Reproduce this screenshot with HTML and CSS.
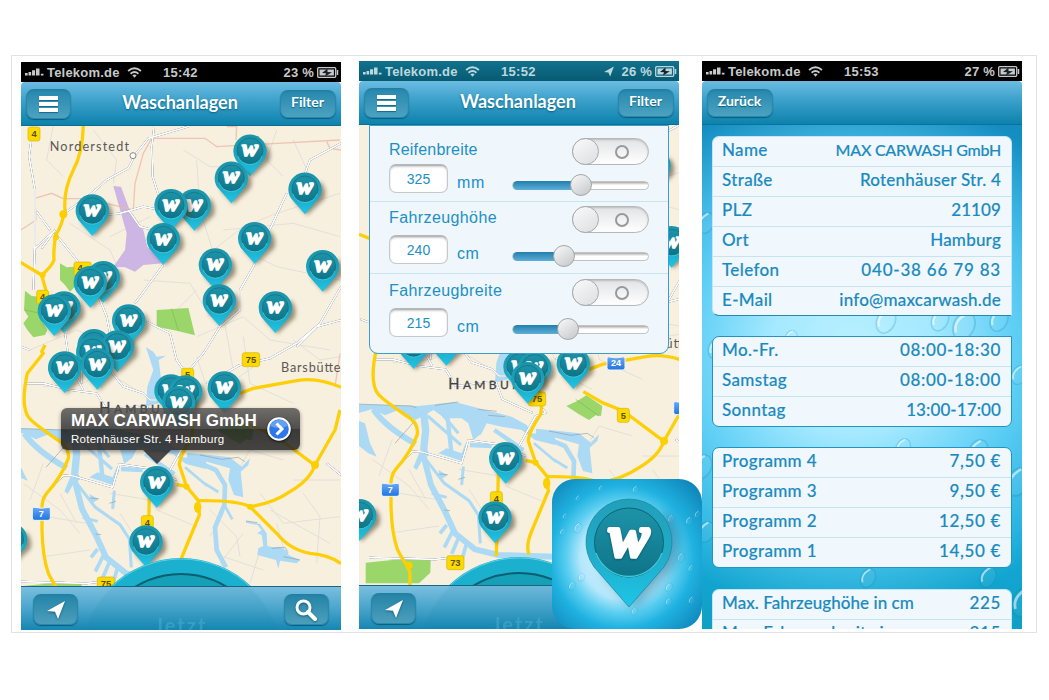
FILE: index.html
```html
<!DOCTYPE html>
<html lang="de">
<head>
<meta charset="utf-8">
<title>Waschanlagen</title>
<link rel="stylesheet" href="styles.css">
</head>
<body>
<svg class="sprites" width="0" height="0" aria-hidden="true">
  <defs>
    <linearGradient id="disc" x1="0" y1="0" x2="0" y2="1"><stop offset="0" stop-color="#1d93a8"/><stop offset="1" stop-color="#0f7488"/></linearGradient>
    <linearGradient id="pinbody" x1="0" y1="0" x2="0" y2="1"><stop offset="0" stop-color="#1b93a9"/><stop offset=".55" stop-color="#1fa5be"/><stop offset="1" stop-color="#1dc7ea"/></linearGradient>
    <linearGradient id="bigbody" x1="0" y1="0" x2="0" y2="1"><stop offset="0" stop-color="#219fb9"/><stop offset=".5" stop-color="#20abc8"/><stop offset="1" stop-color="#1dc6e8"/></linearGradient>
    <linearGradient id="shieldblue" x1="0" y1="0" x2="0" y2="1"><stop offset="0" stop-color="#69a9f5"/><stop offset="1" stop-color="#1f73e0"/></linearGradient>
    <filter id="soft" x="-50%" y="-50%" width="200%" height="200%"><feGaussianBlur stdDeviation="6"/></filter>
    <symbol id="pin" viewBox="-60 -60 140 150" overflow="visible">
      <path d="M-34 34L6 78L58 30A48 48 0 0 0 46 -22Z" fill="#4a3a20" opacity=".55" filter="url(#soft)"/>
      <path d="M-42 28L0 76L42 28A50 50 0 1 0 -42 28Z" fill="url(#pinbody)"/>
      <circle r="39" fill="url(#disc)" stroke="#0d6c80" stroke-width="2"/>
      <path d="M-37 14A39 39 0 0 0 37 14" fill="none" stroke="#43cde4" stroke-width="2.5"/>
      <text class="w" x="0" y="16" text-anchor="middle">w</text>
    </symbol>
    <g id="yshield"><rect x="-18" y="-21" width="36" height="42" rx="7" fill="#fcd900" stroke="#d9b400" stroke-width="2"/></g>
    <g id="yshieldw"><rect x="-26" y="-21" width="52" height="42" rx="7" fill="#fcd900" stroke="#d9b400" stroke-width="2"/></g>
    <g id="bshield"><path d="M-27-14Q-27-21-20-19Q0-14 20-19Q27-21 27-14V13Q27 20 20 20H-20Q-27 20-27 13Z" fill="url(#shieldblue)" stroke="#eef5ff" stroke-width="3"/></g>
    <g id="land">
      <rect x="-100" y="100" width="1200" height="1700" fill="#f7f0df"/>
      <g class="minor">
        <path d="M130 225L110 330L160 380M250 240L320 330L310 400M520 300L600 350L680 350M560 330L570 480L620 640M800 240L770 330L820 380M850 270L900 380M610 600L700 530L800 490L990 430M640 540L850 520L990 560M700 600L800 650L990 690M180 520L300 600L340 690M300 560L420 500M400 690L540 700L600 800M560 860L700 800L780 870L960 900M500 780L560 720M640 800L670 960M700 860L720 1000L850 1060M850 870L930 930L990 920M60 900L200 840L350 900M100 1010L220 1000L320 940M280 960L380 1020M660 1000L760 930M560 920L600 1040L700 1090"/>
        <path d="M40 1300L150 1380L210 1450M110 1400L230 1420M100 1520L240 1500M150 1330L200 1420M300 1330L420 1350M330 1390L400 1500M440 1380L560 1430M640 1390L600 1460M660 1300L720 1200L820 1230M750 1330L820 1420L990 1400M640 1520L760 1560M850 1290L990 1290M780 1380L960 1480M700 1450L630 1540L700 1600M750 1500L720 1600M880 1330L930 1400L920 1540M800 1420L830 1530M100 1240L60 1350M600 1380L680 1460L690 1520"/>
      </g>
      <path d="M310 408L333 410L358 478L400 540L412 590L460 640L400 645L375 665L345 652L310 650L345 600L350 550Z" fill="#cdb5e4"/>
      <g fill="#9bd66a"><path d="M150 640L170 652L195 650L205 700L180 725L165 705L150 690Z"/><path d="M45 722L65 738L90 740L100 790L90 805L112 840L105 855L70 862L52 840L40 820L55 800L42 780Z"/><path d="M440 780L535 774L555 856L500 842L440 830Z"/><path d="M622 1140L655 1125L682 1108L730 1140L726 1170L710 1168L690 1182L660 1165Z"/><path d="M20 1610L100 1602L215 1602L214 1640L180 1672L20 1672Z"/></g>
      <path d="M485 776L505 842M45 780L90 790M650 1120L720 1170" stroke="#7cba53" stroke-width="2" fill="none"/>
      <path d="M408 892L430 905L440 920L468 917L446 930L455 1000L445 1060L408 1070L412 1010L430 960Z" fill="#acd9f4"/>
      <g transform="translate(-12 1092)">
        <path fill="#acd9f4" d="M-10 42L190 48L300 36L400 62L470 80L515 105L530 130L600 140V165L540 150L500 120L440 110L395 100L380 130L355 150L340 100L320 85L270 85L235 60L200 80L180 90L130 60L90 76L50 58L-10 75ZM-10 85L30 100L45 160L65 200L40 190L15 170L-10 155ZM205 160L225 195L205 205L185 240L175 232ZM250 190L275 175L320 190L332 160L340 170L318 212ZM250 240L278 256L258 268Z"/>
        <g class="canal">
          <path stroke-width="18" d="M55 58Q90 110 182 162M205 195L228 285L268 360L300 430L360 478L430 495L600 500"/>
          <path stroke-width="22" d="M205 60L212 120L206 180"/>
          <path stroke-width="9" d="M210 205L268 280L342 332L370 375L376 460M325 230L320 285M218 78L318 165M255 65L310 130M230 310L275 322"/>
          <path stroke-width="13" d="M278 85L290 195M345 165L410 168M418 120L505 180M360 90L372 135"/>
          <path stroke-width="11" d="M292 425L268 472M312 440L290 492M335 460L322 505M275 405L255 430"/>
        </g>
        <path class="quay" d="M0 42L170 48L185 54M240 46L310 36M370 58L425 64M400 76L450 80M250 252L278 254M268 360L285 362M310 268L330 262M180 92L120 160"/>
      </g>
      <g transform="translate(480 1170)">
        <path fill="#acd9f4" d="M50 38L120 45L180 52L215 80L240 55L235 75L212 95L220 172L192 165L175 120L180 85L100 62L55 60ZM228 243L270 252L290 280L292 318L310 322L330 320L355 335L355 345L390 360L380 370L330 362L325 386L318 360L262 345L265 325L280 318L275 285L262 280L275 270L262 255L228 248Z"/>
        <g class="canal"><path stroke-width="14" d="M50 52L138 90L165 135L163 195L135 262L140 330L168 382"/><path stroke-width="8" d="M163 195L187 238M95 125L145 156M45 82L112 138"/></g>
        <path class="quay" d="M90 45L155 58L205 52L225 65M228 243L262 248M305 325L345 322L352 333M340 350L390 360"/>
      </g>
      <path class="dash" d="M75 445L125 430L160 446L230 446L330 470L370 480L375 400L400 310L425 265H585L620 290L990 270M75 445L78 510L33 540M650 230H680L678 270M950 275L960 295L993 300M990 910L975 1010"/>
      <g class="street">
        <path d="M70 225L57 320L75 420L75 580L70 720M433 225L425 290L428 380L450 450M540 228L415 265L375 315L355 355L290 390L245 430L170 485M330 490L400 470L450 480M330 490L240 500M355 480L390 530L430 540M993 280L900 330L885 370M830 430L770 560L730 650L690 720L690 780L630 830L580 910L530 970M460 645L375 760M135 540L70 600M135 550L200 630L250 700L290 800L310 900M80 485L120 540M95 595L135 540M410 815L480 850L500 930L535 980M165 850L180 950L220 1020M5 880L60 900M993 710L930 820L860 880L780 925L690 945M993 810L920 830L860 890M590 1000L690 945M50 1000L100 1000L180 1020L260 1030L290 1080L410 1065M300 960L340 1010L400 1030L420 1050L480 1050"/>
        <path d="M125 1310L160 1276L190 1278L308 1312L328 1242L420 1255L500 1290M480 1260L530 1170L560 1160L500 1080M410 1065L430 1120L520 1160M215 1000V930M950 1240L993 1275M30 1595L230 1600L300 1592"/>
      </g>
      <g class="road">
        <path d="M220 225Q218 310 190 360Q160 420 165 480Q155 530 137 555Q130 600 132 630Q125 650 95 675M0 625L33 638L95 675L113 740M105 885L95 905L100 910L52 970Q30 1070 58 1105Q70 1120 140 1168Q180 1190 175 1225Q155 1280 110 1330Q92 1350 96 1400V1440Q98 1520 115 1570Q130 1600 140 1612L153 1640V1680"/>
        <path d="M690 1030L730 1015L860 992Q920 980 993 1012M990 1080L975 1140L915 1245M673 1097L730 1130L793 1155L900 1235L915 1245Q900 1290 840 1325Q790 1360 720 1370Q680 1350 565 1352L530 1310L508 1245Q508 1220 545 1165L550 1120M500 1303L530 1310M565 1352L568 1395L517 1518Q500 1560 510 1585M720 1370L800 1450Q840 1500 900 1510Q960 1515 993 1541M418 1340L412 1590M670 1030L640 1060M535 980L540 1120"/>
      </g>
      <g fill="#fcd000"><circle cx="160" cy="493" r="12"/><circle cx="138" cy="562" r="9"/><circle cx="98" cy="675" r="9"/><circle cx="915" cy="1245" r="12"/><ellipse cx="563" cy="1372" rx="11" ry="17"/><circle cx="720" cy="1370" r="9"/><circle cx="530" cy="1310" r="9"/><circle cx="150" cy="1618" r="11"/></g>
      <circle cx="369" cy="317" r="9" fill="#fff" stroke="#888" stroke-width="3"/>
      <g class="shieldtext">
        <use href="#yshield" x="72" y="252"/><text x="72" y="261">4</text>
        <use href="#yshieldw" x="218" y="657"/><text x="210" y="664">4</text>
        <use href="#yshield" x="98" y="742"/><text x="98" y="751">4</text>
        <use href="#yshield" x="412" y="1418"/><text x="412" y="1429">4</text>
      </g>
      <use href="#bshield" x="94" y="1391"/><text class="bnum" x="94" y="1400">7</text>
      <text class="town" x="119" y="304" textLength="238">Norderstedt</text>
      <text class="town" x="813" y="966" textLength="190">Barsbüttel</text>
      <text class="city" x="268" y="1088" textLength="250"><tspan font-size="44">H</tspan>AMBURG</text>
    </g>
    <g id="pins">
      <use href="#pin" x="660" y="243" width="140" height="150"/><use href="#pin" x="604" y="324" width="140" height="150"/>
      <use href="#pin" x="825" y="357" width="140" height="150"/><use href="#pin" x="187" y="422" width="140" height="150"/>
      <use href="#pin" x="493" y="406" width="140" height="150"/><use href="#pin" x="423" y="406" width="140" height="150"/>
      <use href="#pin" x="400" y="508" width="140" height="150"/><use href="#pin" x="674" y="505" width="140" height="150"/>
      <use href="#pin" x="556" y="584" width="140" height="150"/><use href="#pin" x="878" y="589" width="140" height="150"/>
      <use href="#pin" x="568" y="692" width="140" height="150"/><use href="#pin" x="736" y="713" width="140" height="150"/>
      <use href="#pin" x="220" y="622" width="140" height="150"/><use href="#pin" x="181" y="637" width="140" height="150"/>
      <use href="#pin" x="102" y="713" width="140" height="150"/><use href="#pin" x="73" y="722" width="140" height="150"/>
      <use href="#pin" x="296" y="752" width="140" height="150"/><use href="#pin" x="192" y="826" width="140" height="150"/>
      <use href="#pin" x="262" y="830" width="140" height="150"/><use href="#pin" x="188" y="846" width="140" height="150"/>
      <use href="#pin" x="104" y="893" width="140" height="150"/><use href="#pin" x="202" y="883" width="140" height="150"/>
      <use href="#pin" x="583" y="953" width="140" height="150"/><use href="#pin" x="423" y="962" width="140" height="150"/>
      <use href="#pin" x="467" y="965" width="140" height="150"/><use href="#pin" x="446" y="997" width="140" height="150"/>
      <use href="#pin" x="380" y="1237" width="140" height="150"/><use href="#pin" x="348" y="1415" width="140" height="150"/>
      <use href="#pin" x="-58" y="1408" width="140" height="150"/>
    </g>
    <g id="dial"><circle cx="160" cy="597" r="101" fill="#1ab0ce"/><circle cx="160" cy="597" r="100" fill="none" stroke="#5cd0e6" stroke-width="1"/><circle cx="160" cy="600" r="88" fill="#16a0b8" stroke="#0b5d70" stroke-width="2"/></g>
    <symbol id="signal" viewBox="0 0 25 10"><path d="M0 6h3v3H0zM4 5h3v4H4zM8 3h3.500v6H8zM12.500 1h4v8h-4zM18 7h3v2h-3z" fill="currentColor"/></symbol>
    <symbol id="wifi" viewBox="0 0 16 12"><g fill="none" stroke="currentColor" stroke-width="2"><path d="M1 4.3Q8-1.7 15 4.3"/><path d="M3.7 7.3Q8 3.7 12.3 7.3"/></g><path d="M5.7 9Q8 7.3 10.3 9L8 11.7Z" fill="currentColor"/></symbol>
    <symbol id="battery" viewBox="0 0 22 11"><rect x=".7" y=".7" width="18" height="9.6" rx="1" fill="none" stroke="currentColor" stroke-width="1.3"/><rect x="2.5" y="2.5" width="14.4" height="6" fill="currentColor"/><path d="M20.5 3v5" stroke="currentColor" stroke-width="1.5"/><path d="M10.5 1.5L5 6L9 6.3L8 9.5L15 5.3L10.5 5Z" fill="#17242a"/></symbol>
    <symbol id="arrow" viewBox="0 0 20 20"><path d="M19 1L1 11L9 11.7L12 19Z" fill="currentColor"/></symbol>
    <symbol id="drop" viewBox="0 0 20 24"><ellipse cx="10" cy="12" rx="6.5" ry="9" transform="rotate(25 10 12)" fill="#fff" fill-opacity=".06" stroke="#0585b8" stroke-opacity=".22" stroke-width="1.2"/><path d="M5 16Q3 9 12 4" fill="none" stroke="#fff" stroke-opacity=".55" stroke-width="1.6"/></symbol>
  </defs>
</svg>

<main class="frame">
  <section class="phone first">
    <header class="status">
      <svg class="signal"><use href="#signal"/></svg><span class="carrier">Telekom.de</span><svg class="wifi"><use href="#wifi"/></svg><span class="clock">15:42</span><span class="percent">23 %</span><svg class="battery"><use href="#battery"/></svg>
    </header>
    <nav class="bar"><button class="btn menu"><i></i><i></i><i></i></button><h1>Waschanlagen</h1><button class="btn filter">Filter</button></nav>
    <div class="map">
      <svg width="320" height="460" viewBox="0 64 320 460">
        <g transform="translate(-11 -12) scale(.33333)"><use href="#land"/>
          <g class="shieldtext"><use href="#yshieldw" x="723" y="929"/><text x="723" y="939">75</text><use href="#yshield" x="533" y="976"/><text x="533" y="985">5</text><use href="#yshieldw" x="288" y="1602"/><text x="288" y="1611">75</text></g>
          <use href="#pins"/></g>
        <use href="#dial"/>
      </svg>
      <aside class="callout"><div><strong>MAX CARWASH GmbH</strong><span>Rotenhäuser Str. 4 Hamburg</span></div>
        <svg class="disclose" viewBox="0 0 24 24"><circle cx="12" cy="12" r="10.8" fill="#2c78ea" stroke="#fff" stroke-width="2"/><path d="M3 9a9.6 9.6 0 0 1 18 0Q12 13 3 9Z" fill="#7db0f5" opacity=".7"/><path d="M9.5 6.5L15 12L9.5 17.5" fill="none" stroke="#fff" stroke-width="3"/></svg>
      </aside>
    </div>
    <footer class="tools"><button class="btn"><svg class="loc"><use href="#arrow"/></svg></button><span class="ghost">Jetzt</span><button class="btn"><svg class="lens" viewBox="0 0 22 22"><circle cx="8.5" cy="8.5" r="6.5" fill="none" stroke="#fff" stroke-width="3"/><path d="M13 13L20 20" stroke="#fff" stroke-width="4" stroke-linecap="round"/></svg></button></footer>
  </section>

  <section class="phone second">
    <header class="status teal">
      <svg class="signal"><use href="#signal"/></svg><span class="carrier">Telekom.de</span><svg class="wifi"><use href="#wifi"/></svg><span class="clock">15:52</span><svg class="gps"><use href="#arrow"/></svg><span class="percent near">26 %</span><svg class="battery"><use href="#battery"/></svg>
    </header>
    <nav class="bar"><button class="btn menu"><i></i><i></i><i></i></button><h1>Waschanlagen</h1><button class="btn filter">Filter</button></nav>
    <div class="map">
      <svg width="320" height="460" viewBox="0 64 320 460">
        <g transform="translate(0 -35) scale(.33333)"><use href="#land"/>
          <g class="shieldtext"><use href="#yshieldw" x="534" y="1119"/><text x="534" y="1129">75</text><use href="#yshield" x="793" y="1168"/><text x="793" y="1178">5</text><use href="#yshieldw" x="289" y="1610"/><text x="289" y="1620">73</text></g>
          <use href="#bshield" x="771" y="1012"/><text class="bnum" x="771" y="1021">24</text><use href="#bshield" x="971" y="1146"/>
          <use href="#pins"/></g>
        <use href="#dial"/>
      </svg>
      <form class="panel">
        <fieldset class="r1"><div class="line"><label>Reifenbreite</label><span class="toggle"></span></div><div class="line low"><output>325</output><span class="unit">mm</span><span class="slider"><i style="width:50%"></i><b></b></span></div></fieldset>
        <fieldset class="r2"><div class="line"><label>Fahrzeughöhe</label><span class="toggle"></span></div><div class="line low"><output>240</output><span class="unit">cm</span><span class="slider"><i style="width:37.5%"></i><b></b></span></div></fieldset>
        <fieldset class="r3"><div class="line"><label>Fahrzeugbreite</label><span class="toggle"></span></div><div class="line low"><output>215</output><span class="unit">cm</span><span class="slider"><i style="width:40.5%"></i><b></b></span></div></fieldset>
      </form>
    </div>
    <footer class="tools"><button class="btn"><svg class="loc"><use href="#arrow"/></svg></button><span class="ghost">Jetzt</span></footer>
  </section>

  <section class="phone third">
    <header class="status">
      <svg class="signal"><use href="#signal"/></svg><span class="carrier">Telekom.de</span><svg class="wifi"><use href="#wifi"/></svg><span class="clock">15:53</span><span class="percent">27 %</span><svg class="battery"><use href="#battery"/></svg>
    </header>
    <nav class="bar"><button class="btn back">Zurück</button></nav>
    <div class="details">
      <svg class="drops" width="320" height="504">
        <use href="#drop" x="-8" y="80" width="24" height="36"/><use href="#drop" x="2" y="208" width="26" height="30"/><use href="#drop" x="80" y="202" width="18" height="22"/><use href="#drop" x="170" y="178" width="28" height="36"/><use href="#drop" x="225" y="180" width="26" height="30"/><use href="#drop" x="245" y="182" width="34" height="38"/><use href="#drop" x="284" y="178" width="26" height="34"/><use href="#drop" x="190" y="310" width="22" height="26"/><use href="#drop" x="260" y="310" width="32" height="34"/><use href="#drop" x="-14" y="320" width="28" height="44"/><use href="#drop" x="300" y="335" width="32" height="44"/><use href="#drop" x="155" y="440" width="22" height="26"/><use href="#drop" x="274" y="438" width="24" height="28"/><use href="#drop" x="-8" y="392" width="24" height="30"/><use href="#drop" x="305" y="456" width="34" height="42"/><use href="#drop" x="306" y="235" width="22" height="30"/>
      </svg>
      <dl class="l1"><div><dt>Name</dt><dd class="tight">MAX CARWASH GmbH</dd></div><div><dt>Straße</dt><dd class="street-name">Rotenhäuser Str. 4</dd></div><div><dt>PLZ</dt><dd class="plz">21109</dd></div><div><dt>Ort</dt><dd class="street-name">Hamburg</dd></div><div><dt>Telefon</dt><dd class="tel">040-38 66 79 83</dd></div><div><dt>E-Mail</dt><dd class="mail">info@maxcarwash.de</dd></div></dl>
      <dl class="l2"><div><dt>Mo.-Fr.</dt><dd>08:00-18:30</dd></div><div><dt>Samstag</dt><dd>08:00-18:00</dd></div><div><dt>Sonntag</dt><dd class="plz">13:00-17:00</dd></div></dl>
      <dl class="l3"><div><dt>Programm 4</dt><dd>7,50 €</dd></div><div><dt>Programm 3</dt><dd>9,50 €</dd></div><div><dt>Programm 2</dt><dd>12,50 €</dd></div><div><dt>Programm 1</dt><dd>14,50 €</dd></div></dl>
      <dl class="l4"><div><dt>Max. Fahrzeughöhe in cm</dt><dd>225</dd></div><div><dt>Max. Fahrzeugbreite in cm</dt><dd>215</dd></div></dl>
    </div>
  </section>

  <svg class="appicon" width="150" height="150" viewBox="0 0 150 150">
    <defs><radialGradient id="glow" cx=".47" cy=".52" r=".7"><stop offset="0" stop-color="#e2f8ff"/><stop offset=".4" stop-color="#b4e7fb"/><stop offset=".54" stop-color="#58cdf0"/><stop offset=".68" stop-color="#1fb2e0"/><stop offset="1" stop-color="#0d80b5"/></radialGradient></defs>
    <rect width="150" height="150" rx="23" fill="url(#glow)"/>
    <use href="#drop" x="22" y="15" width="8" height="9"/><use href="#drop" x="45" y="5" width="8" height="9"/><use href="#drop" x="79" y="5" width="9" height="11"/><use href="#drop" x="9" y="33" width="8" height="9"/><use href="#drop" x="20" y="42" width="12" height="14"/><use href="#drop" x="6" y="48" width="9" height="10"/><use href="#drop" x="114" y="34" width="10" height="12"/><use href="#drop" x="131" y="36" width="12" height="12"/><use href="#drop" x="141" y="30" width="9" height="11"/><use href="#drop" x="123" y="72" width="12" height="13"/><use href="#drop" x="24" y="93" width="11" height="11"/><use href="#drop" x="15" y="101" width="10" height="12"/><use href="#drop" x="112" y="102" width="10" height="13"/><use href="#drop" x="135" y="84" width="8" height="11"/><use href="#drop" x="78" y="127" width="9" height="11"/><use href="#drop" x="112" y="116" width="9" height="14"/><use href="#drop" x="135" y="116" width="9" height="11"/>
    <path d="M50 92L82 128L120 88Q134 58 116 34Z" fill="#075c82" opacity=".5" filter="url(#soft)"/>
    <path d="M42 88L77 128L112 88A43 43 0 1 0 42 88Z" fill="url(#bigbody)" stroke="#17859c" stroke-width=".7"/>
    <circle cx="77" cy="63.500" r="34.500" fill="url(#disc)" stroke="#0b6576" stroke-width="1"/><path d="M44 74A35 35 0 0 0 110 74" fill="none" stroke="#45cbe0" stroke-width="1.200"/>
    <text class="bigw" x="77" y="77" text-anchor="middle">w</text>
  </svg>
</main>
</body>
</html>
```
FILE: styles.css
```css
*, *::before, *::after { box-sizing: border-box; }
body { margin: 0; height: 700px; overflow: hidden; background: #fff; font-family: "Liberation Sans", sans-serif; }
.sprites { position: absolute; }
.frame { position: relative; width: 1026px; height: 578px; margin: 55px 0 0 11px; border: 1px solid #e2e2e2; padding: 5px 0 0 9px; display: flex; align-items: flex-start; }
.phone { width: 320px; height: 568px; overflow: hidden; display: flex; flex-direction: column; flex: none; }
.first { margin-top: 1px; }
.second { margin-left: 18px; }
.third { margin-left: 23px; }

.status { height: 20px; flex: none; background: #000; color: #c8c9ca; display: flex; align-items: center; font-weight: bold; font-size: 13px; padding: 0 2px 0 4px; }
.status.teal { background: linear-gradient(#11728d, #075a72); color: #bcd8df; }
.signal { width: 22px; height: 10px; }
.carrier { letter-spacing: .2px; width: 73px; white-space: nowrap; }
.wifi { width: 15px; height: 11px; margin-left: 7px; }
.clock { margin-left: 21px; letter-spacing: .3px; }
.percent { margin-left: auto; margin-right: 3px; letter-spacing: .2px; }
.gps { width: 12px; height: 11px; margin-left: auto; margin-right: 7px; }
.percent.near { margin-left: 0; }
.battery { width: 22px; height: 11px; }

.bar { height: 44px; flex: none; display: flex; justify-content: space-between; align-items: center; padding: 0 5px; background: linear-gradient(#6cbce2 0, #3ba0ca 45%, #0d82ac 100%); border-bottom: 1px solid #0a6d92; border-radius: 4px 4px 0 0; }
h1 { margin: 0 0 3px 9px; color: #fff; font: 700 18px Lato, sans-serif; text-shadow: 0 1px 2px #06617f; }
.btn { border: 1px solid #2c88ab; border-top-color: #257d9f; border-radius: 8px; padding: 0; height: 30px; width: 45px; background: linear-gradient(#2788ae, #4ba2c0); box-shadow: 0 1px 1px #075f80, inset 0 1px 1px #2583a5; color: #fff; display: flex; align-items: center; justify-content: center; }
.menu { flex-direction: column; gap: 2px; }
.menu i { width: 19px; height: 4px; background: #fff; box-shadow: 0 1px 1px #17688a; }
.filter, .back { width: 56px; height: 28px; font: 700 14px Lato, sans-serif; text-shadow: 0 1px 1px #05617f; padding-bottom: 4px; padding-right: 1px; }
.back { width: 66px; }

.map { flex: none; height: 460px; position: relative; overflow: hidden; }
.map > svg { display: block; }
.minor { fill: none; stroke: #e3dfda; stroke-width: 3; }
.canal { fill: none; stroke: #acd9f4; }
.quay { fill: none; stroke: #94a2a4; stroke-width: 2; }
.dash { fill: none; stroke: #edb6a4; stroke-width: 4; opacity: .75; }
.street { fill: none; stroke: #fff; stroke-width: 5; stroke-linejoin: round; filter: drop-shadow(0 0 1.500px #77808f) drop-shadow(0 0 1px #9aa2b0); }
.road { fill: none; stroke: #fdcf08; stroke-width: 10; stroke-linejoin: round; }
.w { font: italic bold 72px "Liberation Serif", serif; fill: #fff; stroke: #fff; stroke-width: 5px; stroke-linejoin: round; }
.bigw { font: italic bold 60px "Liberation Serif", serif; fill: #fff; stroke: #fff; stroke-width: 4px; stroke-linejoin: round; filter: drop-shadow(0 1px 1px #07596b); }
.shieldtext text { font: bold 28px "Liberation Sans", sans-serif; text-anchor: middle; fill: #5c4e13; }
.bnum { font: bold 27px "Liberation Sans", sans-serif; text-anchor: middle; fill: #fff; }
.town { font: 38px Lato, sans-serif; fill: #5c5856; }
.city { font: 36px Lato, sans-serif; fill: #444; stroke: #444; stroke-width: .8px; }

.callout { position: absolute; left: 40px; top: 282px; width: 239px; height: 42px; border-radius: 6px; background: linear-gradient(rgba(80,80,80,.82), rgba(50,50,50,.85) 50%, rgba(28,28,28,.86) 51%, rgba(38,38,38,.86)); color: #fff; display: flex; justify-content: space-between; padding: 3px 9px 0 10px; box-shadow: 0 2px 4px rgba(0,0,0,.4); }
.callout::after { content: ""; position: absolute; left: 82px; top: 42px; border: 14px solid transparent; border-top-color: rgba(45,45,45,.86); border-bottom: 0; }
.callout strong { display: block; font-size: 17px; line-height: 20px; white-space: nowrap; }
.callout span { display: block; font-size: 11.500px; line-height: 16px; letter-spacing: .27px; white-space: nowrap; }
.disclose { width: 24px; height: 24px; margin-top: 6px; filter: drop-shadow(0 1px 1px #111); }

.tools { flex: none; height: 44px; display: flex; justify-content: space-between; align-items: center; padding: 2px 12px 0; border-top: 1px solid #176783; background: radial-gradient(circle 101px at 160px 72px, rgba(15,130,170,.12) 97%, transparent 100%), linear-gradient(#7abfdf, #4aa5cc 50%, #1587b2); }
.tools .btn { height: 31px; background: linear-gradient(#2484a8, #4c9fbb); }
.loc { width: 20px; height: 20px; filter: drop-shadow(0 1px 1px #165f7c); }
.lens { width: 22px; height: 22px; filter: drop-shadow(0 1px 1px #165f7c); }
.ghost { color: #5cb6d5; opacity: .4; font: 700 20px Lato, sans-serif; margin-top: 30px; letter-spacing: 2px; }
.second .ghost { margin-right: 122px; }

.panel { position: absolute; left: 10px; top: 0; width: 300px; height: 229px; background: #eff7fd; border: 1px solid #3b9dcd; border-radius: 0 0 9px 9px; color: #218fc4; }
fieldset { margin: 0; border: 0; min-width: 0; padding: 4px 19px 0; border-bottom: 1px solid #c7e4ef; }
.r1 { height: 76px; padding-top: 12px; }
.r2 { height: 72px; }
.r3 { height: 79px; border: 0; padding-top: 5px; }
.line { display: flex; align-items: center; height: 27px; }
.line label { font-size: 16px; letter-spacing: .2px; margin-top: -4px; }
.r2 label, .r3 label { letter-spacing: .4px; }
.toggle { margin-left: auto; width: 77px; height: 27px; border: 1px solid #b5b8bb; border-radius: 14px; background: linear-gradient(#e2e3e5, #fff); display: flex; align-items: center; box-shadow: inset 0 1px 2px #bbb; }
.toggle::before { content: ""; width: 27px; height: 27px; margin-left: -1px; border: 1px solid #a7a9ac; border-radius: 50%; background: linear-gradient(145deg, #fafafa, #dcdee0); }
.toggle::after { content: ""; width: 14px; height: 14px; margin-left: 16px; border: 2px solid #999; border-radius: 50%; }
.low { height: 29px; margin-top: 2px; }
.r1 .low { margin-top: -1px; }
output { width: 59px; height: 29px; border: 1px solid #c6c8ca; border-top: 2px solid #b5b7ba; border-radius: 7px; background: #fff; text-align: center; line-height: 27px; font-size: 14px; box-shadow: inset 0 1px 2px #ccc; }
.unit { font-size: 16px; letter-spacing: .6px; margin: 8px 0 0 9px; }
.slider { margin-left: auto; margin-top: 13px; width: 137px; height: 9px; border-radius: 5px; background: linear-gradient(#aaa, #fff 45%); border: 1px solid #c0c2c4; display: flex; align-items: center; }
.slider i { height: 9px; flex: none; border-radius: 5px 0 0 5px; background: linear-gradient(#237eac, #5db0d7); }
.slider b { flex: none; width: 22px; height: 22px; margin-left: -11px; border-radius: 50%; border: 1px solid #a4a6a8; background: linear-gradient(145deg, #fafafa, #c4c6c8); }

.third .bar { border-bottom-color: #0c7299; }
.details { position: relative; height: 504px; overflow: hidden; background: radial-gradient(ellipse 270px 270px at 150px 228px, #baf0ff 0, #a5e9ff 30%, #60cff5 60%, rgba(29,174,225,0) 100%), linear-gradient(#148cc0, #19a8df 40%, #15a9d9 80%, #0fa0c5); padding: 11px 10px 0; }
.drops { position: absolute; left: 0; top: 0; }
dl { position: relative; margin: 0 0 20px; border: 1px solid #2493bd; border-radius: 7px; background: #f0f7fd; color: #1a8bc0; font: 500 17px Lato, sans-serif; -webkit-text-stroke: .15px #1a8bc0; overflow: hidden; }
.l1, .l4 { border-color: #c4e6f4; border-bottom-color: #2787ad; }
.l1 { height: 180px; border-bottom-right-radius: 0; margin-bottom: 20px; }
.l2 { height: 91px; border-top-right-radius: 0; }
.l3 { height: 121px; margin-bottom: 21px; }
.l4 { height: 61px; }
dl div { display: flex; justify-content: space-between; height: 30px; padding: 0 10px 0 9px; line-height: 26px; border-bottom: 1px solid #c6e3ee; }
dl div:last-child { border-bottom: 0; }
dd { margin: 0; letter-spacing: .65px; }
dt { letter-spacing: .35px; }
.l4 dt { letter-spacing: .05px; }
.tight { font-size: 16px; letter-spacing: -.25px; }
.street-name { letter-spacing: .22px; }
.plz { letter-spacing: .1px; }
.tel { letter-spacing: .8px; }
.mail { letter-spacing: .2px; }

.appicon { position: absolute; left: 540px; top: 423px; }
```
